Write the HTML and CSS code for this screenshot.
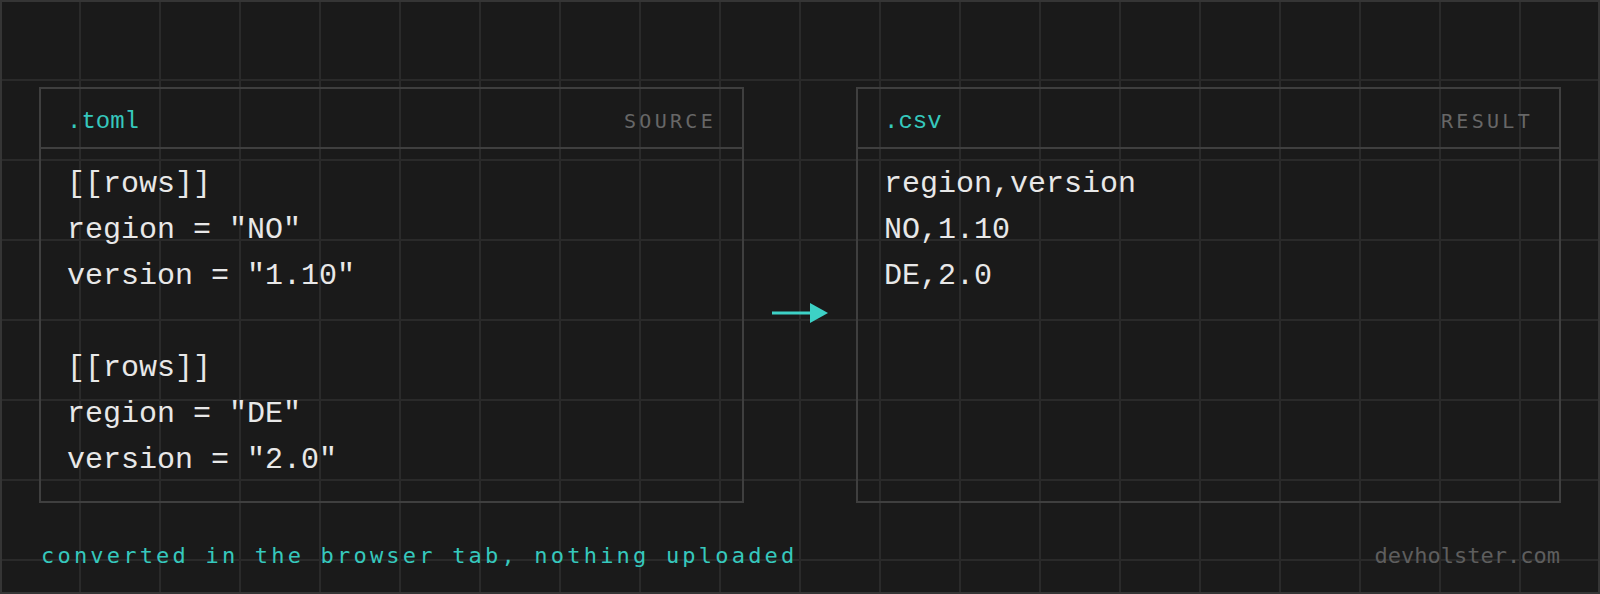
FILE: index.html
```html
<!DOCTYPE html>
<html lang="en">
<head>
<meta charset="utf-8">
<title>toml to csv</title>
<link rel="stylesheet" href="styles.css">
</head>
<body>
<div class="frame">
  <div class="stage">
    <section class="panel">
      <header class="panel-head">
        <span class="ext">.toml</span>
        <span class="role">SOURCE</span>
      </header>
      <pre class="code">[[rows]]
region = "NO"
version = "1.10"

[[rows]]
region = "DE"
version = "2.0"</pre>
    </section>
    <div class="arrow">
      <svg width="56" height="20" viewBox="0 0 56 20" aria-hidden="true">
        <rect x="0" y="8.5" width="40" height="3" fill="#3dd1c6"/>
        <polygon points="38,0 56,10 38,20" fill="#3dd1c6"/>
      </svg>
    </div>
    <section class="panel">
      <header class="panel-head">
        <span class="ext">.csv</span>
        <span class="role">RESULT</span>
      </header>
      <pre class="code">region,version
NO,1.10
DE,2.0</pre>
    </section>
  </div>
  <footer class="foot">
    <span class="note">converted in the browser tab, nothing uploaded</span>
    <span class="site">devholster.com</span>
  </footer>
</div>
</body>
</html>
```
FILE: styles.css
```css
html, body {
  margin: 0;
  padding: 0;
}

body {
  background-color: #1a1a1a;
  background-image:
    linear-gradient(to right, #2a2a2a 2px, transparent 2px),
    linear-gradient(to bottom, #2a2a2a 2px, transparent 2px);
  background-size: 80px 80px;
  background-position: 79px 79px;
  font-family: "Liberation Mono", "DejaVu Sans Mono", monospace;
}

.frame {
  box-sizing: border-box;
  width: 1600px;
  height: 594px;
  border: 2px solid #353535;
  padding: 85px 37px 0;
  display: flex;
  flex-direction: column;
}

.stage {
  display: flex;
  height: 416px;
}

.panel {
  box-sizing: border-box;
  width: 705px;
  flex: 0 0 705px;
  border: 2px solid #3f3f3f;
  display: flex;
  flex-direction: column;
}

.panel-head {
  box-sizing: border-box;
  height: 60px;
  border-bottom: 2px solid #3f3f3f;
  padding: 6px 26px 0 26px;
  display: flex;
  align-items: center;
  justify-content: space-between;
}

.ext {
  font-family: "Liberation Mono", "DejaVu Sans Mono", monospace;
  font-size: 24px;
  color: #36c8bd;
}

.role {
  font-family: "DejaVu Sans Mono", monospace;
  font-size: 20px;
  letter-spacing: 3.3px;
  color: #676767;
}

.code {
  margin: 0;
  padding: 12px 26px 0;
  font-family: "Liberation Mono", "DejaVu Sans Mono", monospace;
  font-size: 30px;
  line-height: 46px;
  color: #e8e8e8;
}

.arrow {
  flex: 1 1 auto;
  display: flex;
  justify-content: center;
  align-items: flex-start;
  padding-top: 216px;
}

.arrow svg {
  display: block;
}

.foot {
  display: flex;
  justify-content: space-between;
  align-items: baseline;
  padding: 40px 1px 0 2px;
}

.note {
  font-family: "DejaVu Sans Mono", monospace;
  font-size: 22px;
  letter-spacing: 3.2px;
  color: #36c8bd;
}

.site {
  font-family: "DejaVu Sans Mono", monospace;
  font-size: 22px;
  color: #5e5e5e;
}
```
